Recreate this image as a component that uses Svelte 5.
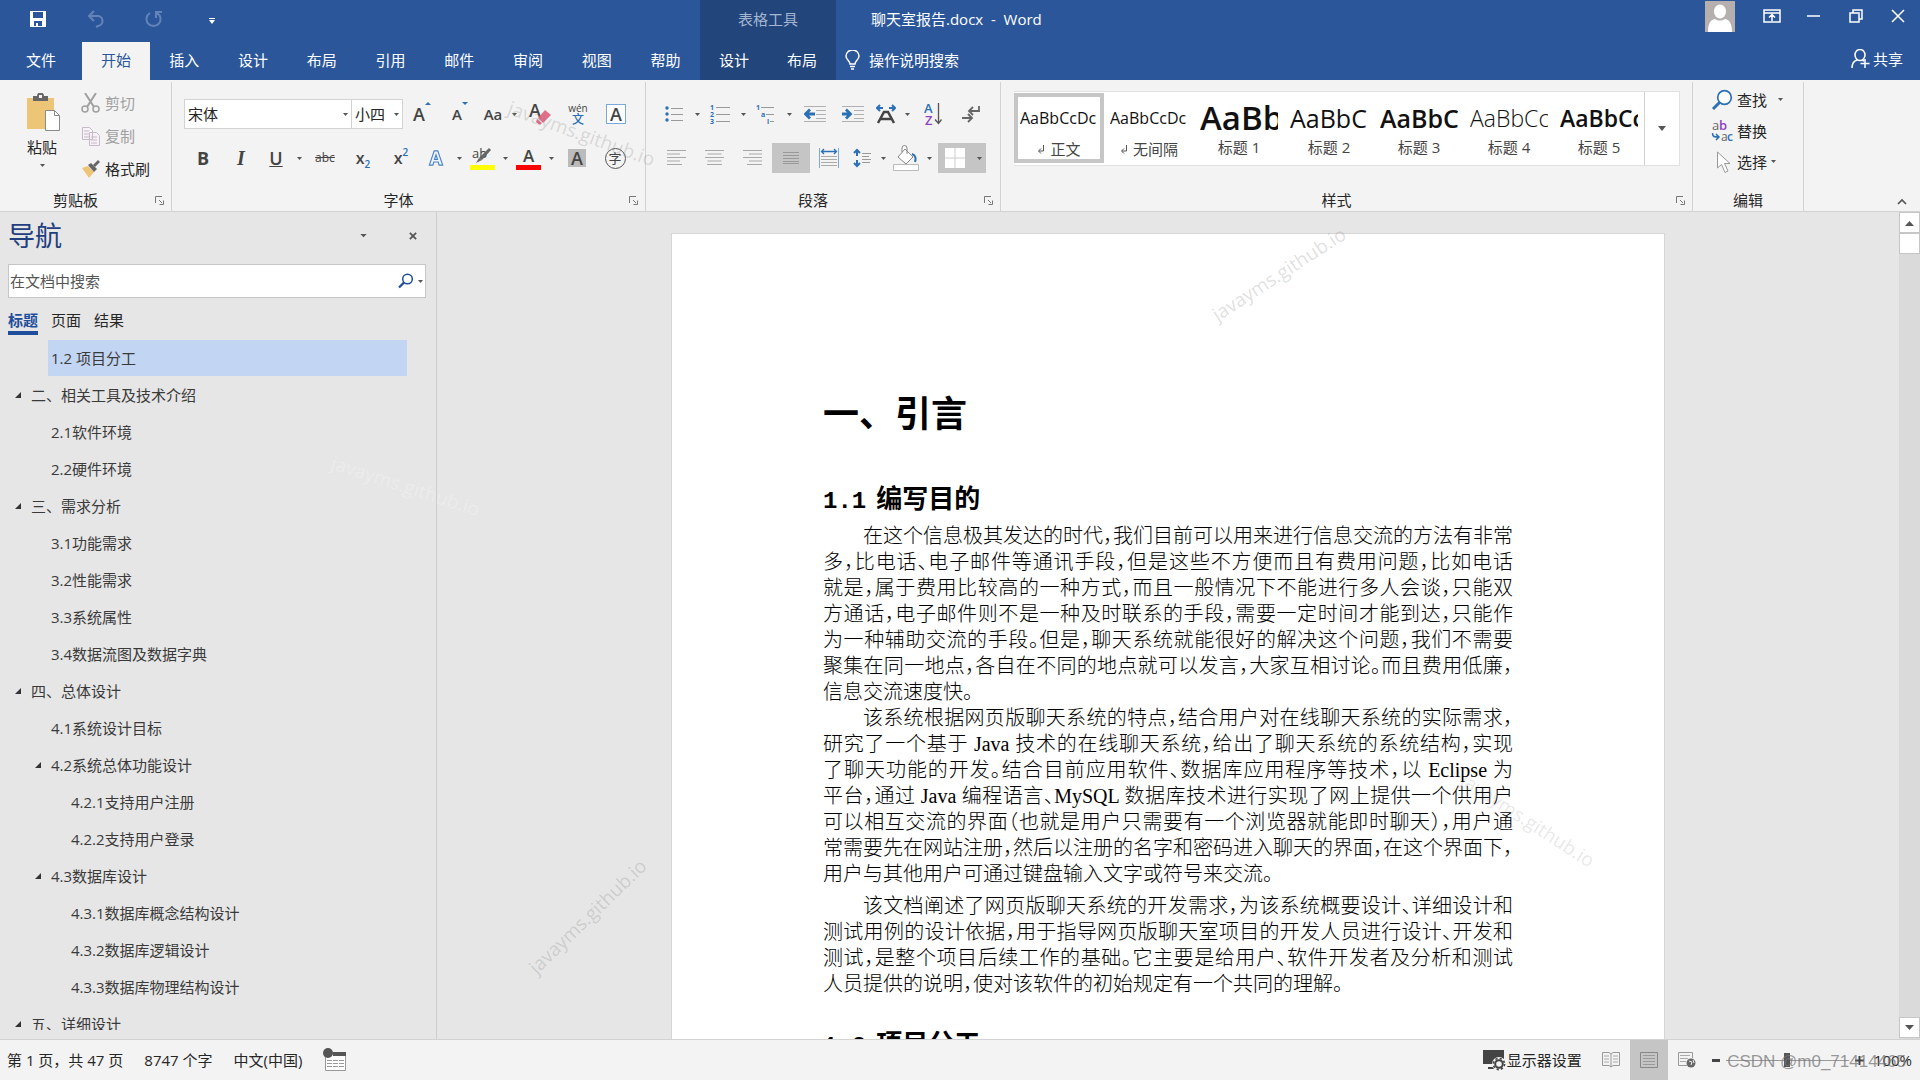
<script>
    let tabs = ['文件', '开始', '插入', '设计', '布局', '引用', '邮件', '审阅', '视图', '帮助'];
    let activeTab = '开始';

    let styles = [
        { name: '正文', sample: 'AaBbCcDc', kind: 'body', mark: true },
        { name: '无间隔', sample: 'AaBbCcDc', kind: 'body', mark: true },
        { name: '标题 1', sample: 'AaBb', kind: 'h1' },
        { name: '标题 2', sample: 'AaBbC', kind: 'h2' },
        { name: '标题 3', sample: 'AaBbC', kind: 'h3' },
        { name: '标题 4', sample: 'AaBbCc', kind: 'h4' },
        { name: '标题 5', sample: 'AaBbCc', kind: 'h5' }
    ];
    let activeStyle = '正文';

    let navTabs = ['标题', '页面', '结果'];
    let activeNav = '标题';

    let outline = [
        { level: 2, text: '1.2 项目分工' },
        { level: 1, text: '二、相关工具及技术介绍', open: true },
        { level: 2, text: '2.1软件环境' },
        { level: 2, text: '2.2硬件环境' },
        { level: 1, text: '三、需求分析', open: true },
        { level: 2, text: '3.1功能需求' },
        { level: 2, text: '3.2性能需求' },
        { level: 2, text: '3.3系统属性' },
        { level: 2, text: '3.4数据流图及数据字典' },
        { level: 1, text: '四、总体设计', open: true },
        { level: 2, text: '4.1系统设计目标' },
        { level: 2, text: '4.2系统总体功能设计', open: true },
        { level: 3, text: '4.2.1支持用户注册' },
        { level: 3, text: '4.2.2支持用户登录' },
        { level: 2, text: '4.3数据库设计', open: true },
        { level: 3, text: '4.3.1数据库概念结构设计' },
        { level: 3, text: '4.3.2数据库逻辑设计' },
        { level: 3, text: '4.3.3数据库物理结构设计' },
        { level: 1, text: '五、详细设计', open: true }
    ];
    let current = '1.2 项目分工';

    // each paragraph is kept as typeset lines
    let paragraphs = [
        [
            '在这个信息极其发达的时代，我们目前可以用来进行信息交流的方法有非常',
            '多，比电话、电子邮件等通讯手段，但是这些不方便而且有费用问题，比如电话',
            '就是，属于费用比较高的一种方式，而且一般情况下不能进行多人会谈，只能双',
            '方通话，电子邮件则不是一种及时联系的手段，需要一定时间才能到达，只能作',
            '为一种辅助交流的手段。但是，聊天系统就能很好的解决这个问题，我们不需要',
            '聚集在同一地点，各自在不同的地点就可以发言，大家互相讨论。而且费用低廉，',
            '信息交流速度快。'
        ],
        [
            '该系统根据网页版聊天系统的特点，结合用户对在线聊天系统的实际需求，',
            '研究了一个基于 Java 技术的在线聊天系统，给出了聊天系统的系统结构，实现',
            '了聊天功能的开发。结合目前应用软件、数据库应用程序等技术，以 Eclipse 为',
            '平台，通过 Java 编程语言、MySQL 数据库技术进行实现了网上提供一个供用户',
            '可以相互交流的界面（也就是用户只需要有一个浏览器就能即时聊天），用户通',
            '常需要先在网站注册，然后以注册的名字和密码进入聊天的界面，在这个界面下，',
            '用户与其他用户可通过键盘输入文字或符号来交流。'
        ],
        [
            '该文档阐述了网页版聊天系统的开发需求，为该系统概要设计、详细设计和',
            '测试用例的设计依据，用于指导网页版聊天室项目的开发人员进行设计、开发和',
            '测试，是整个项目后续工作的基础。它主要是给用户、软件开发者及分析和测试',
            '人员提供的说明，使对该软件的初始规定有一个共同的理解。'
        ]
    ];
</script>

{#snippet caret()}
    <svg class="caret" width="5" height="3" viewBox="0 0 5 3"><path d="M0 0h5L2.500 3z" fill="#555" /></svg>
{/snippet}

{#snippet launcher(label)}
    <button class="launcher" aria-label={label}>
        <svg width="9" height="9" viewBox="0 0 9 9"><path d="M.5 7V.5H7M4 4l3 3M8.500 4.500v4h-4" fill="none" stroke="#777" /></svg>
    </button>
{/snippet}

{#snippet lines(kind)}
    <svg width="20" height="18" viewBox="0 0 20 18">
        {#each [0, 1, 2, 3, 4] as i}
            {@const short = i % 2 ? (kind === 'center' ? 14 : 13) : i === 4 ? 15 : 19}
            {@const x = kind === 'left' ? 0 : kind === 'right' ? 19 - short : (19 - short) / 2}
            <path d="M{x} {1.5 + i * 3.5}h{short}" stroke="#a8a8a8" />
        {/each}
    </svg>
{/snippet}

{#snippet indent(dir)}
    <svg width="22" height="18" viewBox="0 0 22 18">
        <path d="M0 1.500h22M12 5.500h10M12 9.500h10M12 13.500h10M0 16.500h22" stroke="#b0b0b0" />
        {#if dir === 'out'}
            <path d="M11 9H2M6 4.500L1.500 9 6 13.500" fill="none" stroke="#2b70b5" stroke-width="2.800" />
        {:else}
            <path d="M0 9h8M4 4.500L8.500 9 4 13.500" fill="none" stroke="#2b70b5" stroke-width="2.800" />
        {/if}
    </svg>
{/snippet}

<div class="app">
    <header class="titlebar">
        <div class="left-block">
            <div class="quick">
                <button aria-label="保存">
                    <svg width="18" height="18" viewBox="0 0 18 18"><path d="M1 1h16v16H1z" fill="#fff" /><path d="M4 2h10v6H4zM5 11h8v5H5z" fill="#2b579a" /><path d="M7 13h2v3H7z" fill="#fff" /></svg>
                </button>
                <button aria-label="撤消">
                    <svg width="18" height="18" viewBox="0 0 18 18"><path d="M7 1L2 6l5 5M2 6h8a5 5 0 0 1 1 10l-2 1" fill="none" stroke="#6384b8" stroke-width="2" /></svg>
                </button>
                <button aria-label="重复">
                    <svg width="18" height="18" viewBox="0 0 18 18"><path d="M5 3a7 7 0 1 0 7 0M11 8V2h6" fill="none" stroke="#6384b8" stroke-width="2" /></svg>
                </button>
                <button class="qat-more" aria-label="自定义快速访问工具栏">
                    <svg width="6" height="6" viewBox="0 0 6 6"><path d="M0 0h6v1H0zM0 2h6L3 6z" fill="#fff" /></svg>
                </button>
            </div>
            <nav class="tabs">
                {#each tabs as tab}
                    <button class="tab" class:file={tab === '文件'} class:active={tab === activeTab}>{tab}</button>
                {/each}
            </nav>
        </div>
        <div class="context-block">
            <div class="context-title">表格工具</div>
            <div class="tabs">
                <button class="tab">设计</button>
                <button class="tab">布局</button>
            </div>
        </div>
        <div class="right-block">
            <div class="caption">
                <h1>聊天室报告.docx&nbsp; -&nbsp; Word</h1>
                <button class="avatar" aria-label="帐户">
                    <svg width="30" height="31" viewBox="0 0 30 31"><path d="M0 0h30v31H0z" fill="#b5b0ae" /><ellipse cx="15" cy="10.500" rx="6" ry="7" fill="#fff" /><path d="M3 31c0-8 2-12 7-13 3 2 7 2 10 0 5 1 7 5 7 13z" fill="#fff" /></svg>
                </button>
                <button class="win" aria-label="功能区显示选项">
                    <svg width="18" height="14" viewBox="0 0 18 14"><path d="M1 1h16v12H1zM1 4h16M9 12V6M6 8.500L9 5.500l3 3" fill="none" stroke="#fff" stroke-width="1.500" /></svg>
                </button>
                <button class="win" aria-label="最小化">
                    <svg width="14" height="14" viewBox="0 0 14 14"><path d="M0 7h13" stroke="#fff" stroke-width="1.500" /></svg>
                </button>
                <button class="win" aria-label="向下还原">
                    <svg width="14" height="14" viewBox="0 0 14 14"><path d="M1 4h9v9H1zM4 4V1h9v9h-3" fill="none" stroke="#fff" stroke-width="1.500" /></svg>
                </button>
                <button class="win" aria-label="关闭">
                    <svg width="14" height="14" viewBox="0 0 14 14"><path d="M1 1l12 12M13 1L1 13" stroke="#fff" stroke-width="1.500" /></svg>
                </button>
            </div>
            <div class="tell-row">
                <button class="tell">
                    <svg width="16" height="20" viewBox="0 0 16 20"><path d="M5 14c0-3-4-4-4-8a6.500 6 0 0 1 13 0c0 4-4 5-4 8zM5 16.500h5M6 19h3" fill="none" stroke="#fff" stroke-width="1.500" /></svg>
                    操作说明搜索
                </button>
                <button class="share">
                    <svg width="19" height="20" viewBox="0 0 19 20"><ellipse cx="9" cy="6" rx="5" ry="5.500" fill="none" stroke="#fff" stroke-width="1.500" /><path d="M1 19c0-5 2-7 5-8M11 11l2 1M14 10v9M9.500 14.500h9" fill="none" stroke="#fff" stroke-width="1.500" /></svg>
                    共享
                </button>
            </div>
        </div>
    </header>

    <section class="ribbon">
        <div class="group clipboard">
            <div class="body">
                <button class="paste">
                    <svg width="36" height="39" viewBox="0 0 36 39">
                        <path d="M3 5h27v31H3z" fill="#ecc576" />
                        <path d="M9 8V3h4a3.500 3.500 0 0 1 7 0h4v5z" fill="#666" />
                        <path d="M15 2h3v3h-3z" fill="#f3f3f3" />
                        <path d="M21.500 17.500h9l5 5v15h-14z" fill="#fff" stroke="#8a8a8a" />
                        <path d="M30.500 17.500v5h5" fill="none" stroke="#8a8a8a" />
                    </svg>
                    <span>粘贴</span>
                    {@render caret()}
                </button>
                <div class="clip-list">
                    <button class="small off">
                        <svg width="20" height="20" viewBox="0 0 20 20"><path d="M4 0l9 14M15 0L6 14" stroke="#a0a0a0" stroke-width="2" /><circle cx="4" cy="16" r="3" fill="none" stroke="#a0a0a0" stroke-width="1.500" /><circle cx="15" cy="16" r="3" fill="none" stroke="#a0a0a0" stroke-width="1.500" /></svg>
                        剪切
                    </button>
                    <button class="small off">
                        <svg width="20" height="20" viewBox="0 0 20 20"><path d="M1.500 1.500h7l3 3v9h-10zM8.500 6.500h7l3 3v10h-10z" fill="#f7f2f7" stroke="#c6b9c8" /><path d="M3 5h5M3 8h5M3 11h5M10 11h6M10 14h6M10 17h6" stroke="#c6b9c8" /></svg>
                        复制
                    </button>
                    <button class="small">
                        <svg width="20" height="20" viewBox="0 0 20 20"><path d="M1 9l6-2 6 6-5 6z" fill="#ecc576" /><path d="M7 6l3-2 6 6-3 3z" fill="#666" /><path d="M12 6l5-5 2 2-5 5z" fill="#666" /></svg>
                        格式刷
                    </button>
                </div>
            </div>
            <div class="foot"><span>剪贴板</span>{@render launcher('剪贴板设置')}</div>
        </div>

        <div class="group font">
            <div class="body rows">
                <div class="row">
                    <label class="combo face"><input value="宋体" aria-label="字体" />{@render caret()}</label>
                    <label class="combo size"><input value="小四" aria-label="字号" />{@render caret()}</label>
                    <button class="tool" aria-label="增大字号"><span class="glyph">A</span><svg class="tick" width="6" height="3" viewBox="0 0 6 3"><path d="M0 3h6L3 0z" fill="#2b70b5" /></svg></button>
                    <button class="tool" aria-label="减小字号"><span class="glyph less">A</span><svg class="tick" width="6" height="3" viewBox="0 0 6 3"><path d="M0 0h6L3 3z" fill="#2b70b5" /></svg></button>
                    <button class="tool tight" aria-label="更改大小写"><span class="less">Aa</span>{@render caret()}</button>
                    <button class="tool" aria-label="清除所有格式">
                        <svg width="24" height="26" viewBox="0 0 24 26"><text x="1" y="16" font-size="18" font-weight="600" fill="#444">A</text><path d="M10 17l7-8 6 5-8 8z" fill="#e0708a" /><path d="M9 18l5 4-2 2-4-3z" fill="#e0708a" /></svg>
                    </button>
                    <button class="tool wen" aria-label="拼音指南"><span>wén</span><b>文</b></button>
                    <button class="tool" aria-label="字符边框"><span class="boxed">A</span></button>
                </div>
                <div class="row">
                    <button class="tool bold" aria-label="加粗">B</button>
                    <button class="tool italic" aria-label="倾斜">I</button>
                    <button class="tool split" aria-label="下划线"><span class="under">U</span>{@render caret()}</button>
                    <button class="tool strike" aria-label="删除线">abc</button>
                    <button class="tool script" aria-label="下标">x<sub>2</sub></button>
                    <button class="tool script" aria-label="上标">x<sup>2</sup></button>
                    <button class="tool split" aria-label="文本效果">
                        <svg width="16" height="18" viewBox="0 0 18 20"><path d="M1.500 18L7 2h4l5.500 16h-4l-1-3.500h-5L5.500 18zM9 6.500l-1.700 5h3.400z" fill="#eef4fb" stroke="#4a82c4" stroke-width="1.300" /></svg>
                        {@render caret()}
                    </button>
                    <button class="tool split" aria-label="突出显示">
                        <svg width="26" height="26" viewBox="0 0 26 26"><text x="3" y="13" font-size="13" fill="#444">ab</text><path d="M20 3l2 2-9 10-3-2z" fill="#666" /><path d="M10 13l3 2-6 3z" fill="#666" /><path d="M1 20h25v5H1z" fill="#ff0" /></svg>
                        {@render caret()}
                    </button>
                    <button class="tool split" aria-label="字体颜色">
                        <svg width="26" height="26" viewBox="0 0 26 26"><text x="8" y="17" font-size="17" font-weight="600" fill="#444">A</text><path d="M1 20h25v5H1z" fill="#f00" /></svg>
                        {@render caret()}
                    </button>
                    <button class="tool" aria-label="字符底纹"><span class="shaded">A</span></button>
                    <button class="tool" aria-label="带圈字符"><span class="ringed">字</span></button>
                </div>
            </div>
            <div class="foot"><span>字体</span>{@render launcher('字体设置')}</div>
        </div>

        <div class="group para">
            <div class="body rows">
                <div class="row">
                    <button class="tool split" aria-label="项目符号">
                        <svg width="18" height="18" viewBox="0 0 18 18"><circle cx="2" cy="3" r="1.700" fill="#2b70b5" /><circle cx="2" cy="9" r="1.700" fill="#2b70b5" /><circle cx="2" cy="15" r="1.700" fill="#2b70b5" /><path d="M6 3.500h12M6 9.500h12M6 15.500h12" stroke="#999" /></svg>
                        {@render caret()}
                    </button>
                    <button class="tool split" aria-label="编号">
                        <svg width="20" height="20" viewBox="0 0 20 20"><g font-size="7" font-weight="700" fill="#2b70b5"><text x="0" y="6">1</text><text x="0" y="13">2</text><text x="0" y="20">3</text></g><path d="M6 3.500h14M6 10.500h14M6 17.500h14" stroke="#999" /></svg>
                        {@render caret()}
                    </button>
                    <button class="tool split" aria-label="多级列表">
                        <svg width="20" height="20" viewBox="0 0 20 20"><g font-size="7" font-weight="700" fill="#2b70b5"><text x="0" y="6">1</text><text x="5" y="13">a</text><text x="11" y="20">i</text></g><path d="M5 3.500h13M10 10.500h8M14 17.500h4" stroke="#999" /></svg>
                        {@render caret()}
                    </button>
                    <button class="tool" aria-label="减少缩进量">{@render indent('out')}</button>
                    <button class="tool" aria-label="增加缩进量">{@render indent('in')}</button>
                    <button class="tool tight" aria-label="中文版式">
                        <svg width="20" height="20" viewBox="0 0 20 20"><path d="M1 4h6M4 1L1 4l3 3M19 4h-6M16 1l3 3-3 3" fill="none" stroke="#2b70b5" stroke-width="2" /><path d="M2 19L8 8h4l6 11M5 15h10" fill="none" stroke="#444" stroke-width="2.500" /></svg>
                        {@render caret()}
                    </button>
                    <button class="tool" aria-label="排序">
                        <svg width="18" height="22" viewBox="0 0 18 22"><text x="0" y="10" font-size="13" font-weight="600" fill="#2b70b5">A</text><text x="1" y="22" font-size="13" font-weight="600" fill="#8e44c0">Z</text><path d="M14.500 0v20M11 16.500l3.500 4 3-4" fill="none" stroke="#555" stroke-width="1.300" /></svg>
                    </button>
                    <button class="tool" aria-label="显示编辑标记">
                        <svg width="20" height="18" viewBox="0 0 20 18"><path d="M18 1v5H9M12 2L8 6l4 4M1 13h9M7 9l4 4-4 4" fill="none" stroke="#666" stroke-width="1.800" /></svg>
                    </button>
                </div>
                <div class="row">
                    <button class="tool" aria-label="左对齐">{@render lines('left')}</button>
                    <button class="tool" aria-label="居中">{@render lines('center')}</button>
                    <button class="tool" aria-label="右对齐">{@render lines('right')}</button>
                    <button class="tool on" aria-label="两端对齐">
                        <svg width="16" height="14" viewBox="0 0 16 14"><path d="M0 1.500h16M0 4.500h16M0 7.500h16M0 10.500h16M0 12.500h16" stroke="#999" /></svg>
                    </button>
                    <button class="tool" aria-label="分散对齐">
                        <svg width="20" height="20" viewBox="0 0 20 20"><path d="M.5 0v20M19.500 0v20" stroke="#7ba8d8" /><path d="M3 3.500h14M5 1L2.500 3.500 5 6M15 1l2.500 2.500L15 6" fill="none" stroke="#2b70b5" stroke-width="1.300" /><path d="M2 8.500h16M2 11.500h16M2 14.500h16M2 17.500h16" stroke="#aaa" /></svg>
                    </button>
                    <button class="tool tight" aria-label="行和段落间距">
                        <svg width="18" height="20" viewBox="0 0 18 20"><path d="M4 2v6M1 5l3-3 3 3M4 12v6M1 15l3 3 3-3" fill="none" stroke="#2b70b5" stroke-width="2" /><path d="M9 5.500h9M9 8.500h7M9 11.500h9M9 14.500h8" stroke="#999" /></svg>
                        {@render caret()}
                    </button>
                    <button class="tool split" aria-label="底纹">
                        <svg width="26" height="26" viewBox="0 0 26 26"><path d="M12 4l8 8-7 7-8-7zM9 7V3a2 2 0 0 1 5 0v6" fill="#fff" stroke="#888" /><path d="M19 9c4 1 4 5 3 8" fill="none" stroke="#2b70b5" stroke-width="2" /><path d="M.5 19.500h25v6H.5z" fill="#fff" stroke="#bbb" /></svg>
                        {@render caret()}
                    </button>
                    <button class="tool wide on" aria-label="边框">
                        <svg width="20" height="20" viewBox="0 0 20 20"><path d="M0 0h20v20H0z" fill="#fff" /><path d="M10 0v20M0 10h20" stroke="#ccc" /></svg>
                        {@render caret()}
                    </button>
                </div>
            </div>
            <div class="foot"><span>段落</span>{@render launcher('段落设置')}</div>
        </div>

        <div class="group style-group">
            <div class="body">
                <div class="gallery">
                    {#each styles as style}
                        <button class="style" class:chosen={style.name === activeStyle}>
                            <span class="sample {style.kind}">{style.sample}</span>
                            <span class="style-name">
                                {#if style.mark}
                                    <svg width="8" height="9" viewBox="0 0 8 9"><path d="M6.500 0v6H2M4 3.500L1.500 6 4 8.500" fill="none" stroke="#555" /></svg>
                                {/if}
                                {style.name}
                            </span>
                        </button>
                    {/each}
                    <button class="more" aria-label="其他样式"><svg width="10" height="6" viewBox="0 0 10 6"><path d="M1 0h8L5 5z" fill="#555" /></svg></button>
                </div>
            </div>
            <div class="foot"><span>样式</span>{@render launcher('样式窗格')}</div>
        </div>

        <div class="group edit">
            <div class="body edit-list">
                <button class="small">
                    <svg width="22" height="22" viewBox="0 0 22 22"><circle cx="13.500" cy="8.500" r="6.800" fill="#fff" stroke="#2b70b5" stroke-width="1.700" /><path d="M8.500 13.500L2 20" stroke="#2b70b5" stroke-width="3" /></svg>
                    查找
                    <i>{@render caret()}</i>
                </button>
                <button class="small">
                    <svg width="22" height="22" viewBox="0 0 22 22"><g font-size="13"><text x="1" y="10" fill="#666">a</text><text x="8" y="10" fill="#8e44c0" font-weight="600">b</text><text x="10" y="21" fill="#666" font-size="12">a</text><text x="16" y="21" fill="#2b70b5" font-size="12" font-weight="600">c</text></g><path d="M1.500 13c0 4 2 4 6 4M5 14l3 3-3 3" fill="none" stroke="#2b70b5" stroke-width="1.500" /></svg>
                    替换
                </button>
                <button class="small">
                    <svg width="22" height="22" viewBox="0 0 22 22"><path d="M6.500 1v16l4-3.500 3.500 8 3-1.500-3.500-7.500h5.500z" fill="#fff" stroke="#999" /></svg>
                    选择
                    {@render caret()}
                </button>
            </div>
            <div class="foot"><span>编辑</span></div>
        </div>
        <button class="collapse" aria-label="折叠功能区"><svg width="10" height="7" viewBox="0 0 10 7"><path d="M1 6l4-4 4 4" fill="none" stroke="#555" stroke-width="1.700" /></svg></button>
        <span class="watermark wm-ribbon">javayms.github.io</span>
    </section>

    <main class="workspace">
        <aside class="nav">
            <div class="nav-head">
                <h2>导航</h2>
                <button aria-label="任务窗格选项"><svg width="7" height="4" viewBox="0 0 8 5"><path d="M0 0h8L4 4z" fill="#555" /></svg></button>
                <button aria-label="关闭窗格"><svg width="8" height="8" viewBox="0 0 9 9"><path d="M1 1l7 7M8 1L1 8" stroke="#555" stroke-width="2" /></svg></button>
            </div>
            <div class="search">
                <input placeholder="在文档中搜索" aria-label="在文档中搜索" />
                <button aria-label="搜索">
                    <svg width="16" height="16" viewBox="0 0 16 16"><circle cx="9.500" cy="6" r="4.800" fill="none" stroke="#1f4e9c" stroke-width="1.500" /><path d="M6 9.500L1 14.500" stroke="#1f4e9c" stroke-width="2.300" /></svg>
                    {@render caret()}
                </button>
            </div>
            <div class="nav-tabs">
                {#each navTabs as tab}
                    <button class:active={tab === activeNav}>{tab}</button>
                {/each}
            </div>
            <ul class="outline">
                {#each outline as item}
                    <li class="level{item.level}">
                        <span class="arrow">
                            {#if item.open}<svg width="6" height="6" viewBox="0 0 7 7"><path d="M7 0v7H0z" fill="#333" /></svg>{/if}
                        </span>
                        <a href="#doc" class:current={item.text === current}>{item.text}</a>
                    </li>
                {/each}
            </ul>
            <span class="watermark wm-nav">javayms.github.io</span>
        </aside>

        <div class="canvas">
            <article class="page" id="doc">
                <h1>一、引言</h1>
                <h2><span>1.1</span>编写目的</h2>
                {#each paragraphs as para}
                    <p>
                        {#each para as line}
                            <span class="line">{line}</span>
                        {/each}
                    </p>
                {/each}
                <h2><span>1.2</span>项目分工</h2>
            </article>
            <span class="watermark wm-top">javayms.github.io</span>
            <span class="watermark wm-side">javayms.github.io</span>
            <span class="watermark wm-low">javayms.github.io</span>
        </div>

        <div class="scroll">
            <button aria-label="向上滚动"><svg width="9" height="6" viewBox="0 0 9 6"><path d="M0 6h9L4.500 1z" fill="#555" /></svg></button>
            <div class="thumb"></div>
            <button class="down" aria-label="向下滚动"><svg width="9" height="6" viewBox="0 0 9 6"><path d="M0 0h9L4.500 5z" fill="#555" /></svg></button>
        </div>
    </main>

    <footer class="status">
        <span>第 1 页，共 47 页</span>
        <span>8747 个字</span>
        <span>中文(中国)</span>
        <button aria-label="宏录制">
            <svg width="24" height="24" viewBox="0 0 24 24"><path d="M2.500 5.500h20v17h-20z" fill="#fff" stroke="#999" /><path d="M10 4h13v4H10z" fill="#555" /><circle cx="5" cy="5" r="5" fill="#555" /><path d="M4 12.500h17M4 15.500h17M4 18.500h17" stroke="#999" stroke-dasharray="5 1" /></svg>
        </button>
        <div class="spacer"></div>
        <button class="display">
            <svg width="23" height="22" viewBox="0 0 23 22"><path d="M0 1h21v14H0zM5 18h7v2H5z" fill="#444" /><circle cx="16" cy="15" r="7" fill="#f3f3f3" /><circle cx="16" cy="15" r="3.800" fill="none" stroke="#444" stroke-width="2" /><circle cx="16" cy="15" r="5.600" fill="none" stroke="#444" stroke-width="1.600" stroke-dasharray="2.200 2.200" /></svg>
            显示器设置
        </button>
        <button class="view" aria-label="阅读视图">
            <svg width="18" height="16" viewBox="0 0 18 16"><path d="M9 2L7 .5H.5v13H7L9 15l2-1.500h6.500V.5H11zM9 2v13" fill="none" stroke="#999" /><path d="M2 4h5M2 7h5M2 10h5M11 4h5M11 7h5M11 10h5" stroke="#aaa" /></svg>
        </button>
        <button class="view on" aria-label="页面视图">
            <svg width="18" height="16" viewBox="0 0 18 16"><path d="M.5.5h17v15H.5z" fill="none" stroke="#888" /><path d="M3 3.500h12M3 6.500h12M3 9.500h12M3 12.500h12" stroke="#999" /></svg>
        </button>
        <button class="view" aria-label="Web 版式视图">
            <svg width="18" height="16" viewBox="0 0 18 16"><path d="M9 13.500H.5V.5h14V6" fill="none" stroke="#999" /><path d="M2 3.500h10M2 6.500h8M2 9.500h6" stroke="#aaa" /><circle cx="13" cy="11" r="4.500" fill="#666" /><path d="M11 9l3 1-1 3M15 8l1 3" stroke="#eee" fill="none" /></svg>
        </button>
        <button class="step" aria-label="缩小"><svg width="9" height="3" viewBox="0 0 9 3"><path d="M0 0h8v3H0z" fill="#444" /></svg></button>
        <input class="zoom" type="range" min="10" max="190" value="100" aria-label="显示比例" />
        <button class="step" aria-label="放大"><svg width="9" height="9" viewBox="0 0 9 9"><path d="M0 4.500h9M4.500 0v9" stroke="#444" stroke-width="2" /></svg></button>
        <span class="percent">100%</span>
        <span class="credit">CSDN @m0_71414465</span>
    </footer>
</div>

<style>
    :global(body){
        margin: 0;
        overflow: hidden;
    }
    .app{
        display: flex;
        flex-direction: column;
        height: 100vh;
        overflow: hidden;
        background: #e6e6e6;
        color: #262626;
        font: 15px/20px "Open Sans", "Noto Sans CJK SC", sans-serif;
    }
    button, input{
        font: inherit;
        color: inherit;
        background: none;
        border: 0;
        padding: 0;
        margin: 0;
    }
    svg{
        display: block;
        flex: none;
    }
    h1, h2, p, ul{
        margin: 0;
        padding: 0;
        font-weight: 400;
        font-size: inherit;
    }

    /* title bar */
    .titlebar{
        display: flex;
        height: 80px;
        flex: none;
        background: #2b579a;
        color: #fff;
    }
    .left-block, .context-block, .right-block{
        display: flex;
        flex-direction: column;
    }
    .left-block{
        width: 700px;
    }
    .context-block{
        width: 136px;
        background: #22457b;
    }
    .right-block{
        flex: 1;
    }
    .quick{
        display: flex;
        height: 42px;
        padding-left: 9px;
    }
    .quick button{
        width: 58px;
        height: 38px;
        display: flex;
        align-items: center;
        justify-content: center;
    }
    .quick .qat-more{
        padding-top: 4px;
    }
    .tabs{
        display: flex;
        height: 38px;
    }
    .tab{
        flex: 1;
        padding-bottom: 2px;
    }
    .tab.file{
        flex: none;
        width: 82px;
    }
    .tab.active{
        flex: none;
        width: 68px;
        background: #f3f3f3;
        color: #2b579a;
    }
    .context-title{
        height: 42px;
        line-height: 38px;
        text-align: center;
        color: #a3b5d1;
    }
    .caption{
        display: flex;
        height: 42px;
        padding-right: 1px;
    }
    .caption h1{
        flex: 1;
        padding-left: 35px;
        line-height: 38px;
    }
    .avatar{
        height: 32px;
        margin-right: 16px;
    }
    .win{
        width: 42px;
        height: 32px;
        display: flex;
        align-items: center;
        justify-content: center;
    }
    .tell-row{
        display: flex;
        justify-content: space-between;
        height: 36px;
        padding: 0 17px 2px 9px;
    }
    .tell, .share{
        display: flex;
        align-items: center;
        gap: 8px;
    }
    .share{
        gap: 3px;
        height: 34px;
    }

    /* ribbon */
    .ribbon{
        position: relative;
        display: flex;
        flex: none;
        height: 132px;
        padding-top: 2px;
        box-sizing: border-box;
        background: #f3f3f3;
        border-bottom: 1px solid #d2d2d2;
    }
    .group{
        display: flex;
        flex-direction: column;
        box-sizing: border-box;
        border-right: 1px solid #d2d2d2;
    }
    .clipboard{
        width: 172px;
    }
    .font{
        width: 474px;
    }
    .para{
        width: 355px;
    }
    .style-group{
        width: 692px;
    }
    .edit{
        width: 111px;
    }
    .body{
        flex: 1;
        display: flex;
    }
    .foot{
        display: flex;
        height: 20px;
        align-items: center;
        padding-bottom: 1px;
    }
    .foot span{
        flex: 1;
        text-align: center;
    }
    .launcher{
        width: 20px;
        padding-left: 4px;
    }
    .paste{
        width: 52px;
        margin-left: 16px;
        padding-top: 11px;
        display: flex;
        flex-direction: column;
        align-items: center;
    }
    .paste span{
        margin: 5px 0 7px;
    }
    .clip-list{
        padding: 4px 0 0 13px;
        display: flex;
        flex-direction: column;
    }
    .small{
        display: flex;
        align-items: center;
        gap: 4px;
        height: 33px;
    }
    .small.off{
        color: #a0a0a0;
    }
    .rows{
        flex-direction: column;
        padding-top: 17px;
    }
    .row{
        display: flex;
        height: 30px;
        margin-bottom: 14px;
        align-items: center;
        padding-left: 12px;
    }
    .combo{
        display: flex;
        align-items: center;
        height: 30px;
        box-sizing: border-box;
        background: #fff;
        border: 1px solid #d2d2d2;
        padding: 0 3px;
    }
    .combo input{
        flex: 1;
        min-width: 0;
        outline: 0;
    }
    .combo.face{
        width: 168px;
    }
    .combo.size{
        width: 51px;
        border-left: 0;
    }
    .tool{
        width: 38px;
        height: 30px;
        flex: none;
        display: flex;
        align-items: center;
        justify-content: center;
        color: #444;
        font-size: 18px;
    }
    .tool.split, .tool.tight, .tool.wide{
        display: grid;
        grid-template-columns: 1fr 14px;
        justify-items: center;
    }
    .tool.split{
        width: 46px;
    }
    .tool.tight{
        width: 42px;
    }
    .tool.wide{
        width: 48px;
        margin-left: 2px;
    }
    .on{
        background: #c5c5c5;
    }
    .glyph{
        font-size: 18px;
        font-weight: 600;
    }
    .less{
        font-size: 15px;
        font-weight: 600;
    }
    .tick{
        align-self: flex-start;
        margin-top: 3px;
    }
    .wen{
        flex-direction: column;
        font-size: 10px;
        line-height: 10px;
    }
    .wen b{
        font-size: 12px;
        line-height: 13px;
        color: #2b70b5;
        font-weight: 500;
    }
    .boxed{
        width: 18px;
        height: 18px;
        line-height: 18px;
        border: 1px solid #7ba8d8;
        background: #fff;
        font-weight: 600;
    }
    .shaded{
        width: 18px;
        height: 18px;
        line-height: 18px;
        background: #bbb;
        font-weight: 600;
    }
    .ringed{
        width: 19px;
        height: 19px;
        line-height: 18px;
        border: 1px solid #555;
        border-radius: 50%;
        font-size: 13px;
    }
    .bold{
        font-weight: 700;
    }
    .italic{
        font-family: "Liberation Serif", serif;
        font-style: italic;
        font-size: 20px;
        font-weight: 700;
    }
    .under{
        text-decoration: underline;
        font-weight: 600;
    }
    .strike{
        text-decoration: line-through;
        font-size: 12px;
    }
    .script{
        font-weight: 600;
        font-size: 16px;
    }
    .script sub, .script sup{
        font-size: 10px;
        line-height: 10px;
        color: #2b70b5;
    }
    .script sub{
        align-self: flex-end;
        margin-bottom: 4px;
    }
    .script sup{
        align-self: flex-start;
        margin-top: 4px;
    }
    .gallery{
        display: flex;
        height: 75px;
        margin: 9px 0 0 13px;
        box-sizing: border-box;
        background: #fff;
        border: 1px solid #e1e1e1;
        border-left: 0;
    }
    .style{
        width: 90px;
        height: 70px;
        margin-top: 1px;
        box-sizing: border-box;
        border: 4px solid transparent;
        display: flex;
        flex-direction: column;
        align-items: center;
    }
    .style.chosen{
        border-color: #c6c6c6;
    }
    .sample{
        width: 78px;
        height: 40px;
        line-height: 42px;
        overflow: hidden;
        text-align: left;
        white-space: nowrap;
        color: #111;
        font-size: 16px;
    }
    .sample.h1{
        font-size: 33px;
        font-weight: 600;
    }
    .sample.h2{
        font-size: 25px;
    }
    .sample.h3{
        font-size: 25px;
        font-weight: 600;
    }
    .sample.h4{
        font-size: 23px;
        font-weight: 300;
    }
    .sample.h5{
        font-size: 23px;
        font-weight: 600;
    }
    .style-name{
        display: flex;
        align-items: center;
        gap: 5px;
        color: #444;
    }
    .more{
        flex: 1;
        width: 35px;
        border-left: 1px solid #d2d2d2;
        display: flex;
        align-items: center;
        justify-content: center;
    }
    .edit-list{
        flex-direction: column;
        padding: 2px 0 0 18px;
    }
    .edit-list .small{
        height: 31px;
    }
    .edit-list i{
        margin-left: 7px;
    }
    .collapse{
        margin: auto 13px 6px auto;
    }

    /* workspace */
    .workspace{
        flex: 1;
        min-height: 0;
        display: flex;
    }
    .nav{
        position: relative;
        width: 437px;
        flex: none;
        display: flex;
        flex-direction: column;
        border-right: 1px solid #cdcdcd;
        padding-bottom: 9px;
        box-sizing: border-box;
    }
    .nav-head{
        display: flex;
        align-items: center;
        height: 48px;
        padding: 0 16px 0 8px;
    }
    .nav-head h2{
        flex: 1;
        font-size: 27px;
        line-height: 40px;
        color: #1f3f7f;
    }
    .nav-head button{
        width: 14px;
        display: flex;
        justify-content: center;
        margin-left: 36px;
    }
    .search{
        display: flex;
        height: 34px;
        margin: 4px 10px 0 8px;
        box-sizing: border-box;
        background: #fff;
        border: 1px solid #c6c6c6;
    }
    .search input{
        flex: 1;
        padding-left: 1px;
        outline: 0;
    }
    .search input::placeholder{
        color: #555;
        opacity: 1;
    }
    .search button{
        display: flex;
        align-items: center;
        gap: 4px;
        padding-right: 2px;
    }
    .nav-tabs{
        display: flex;
        gap: 13px;
        padding: 10px 0 0 8px;
        margin-bottom: 4px;
    }
    .nav-tabs button{
        height: 27px;
        line-height: 24px;
        border-bottom: 4px solid transparent;
        box-sizing: border-box;
    }
    .nav-tabs .active{
        color: #1f4e9c;
        font-weight: 700;
        border-color: #1f4e9c;
    }
    .outline{
        flex: 1;
        min-height: 0;
        overflow: hidden;
        list-style: none;
        color: #3a3a3a;
    }
    .outline li{
        display: flex;
        align-items: center;
        height: 37px;
        padding-right: 29px;
    }
    .level1{
        padding-left: 15px;
    }
    .level2{
        padding-left: 35px;
    }
    .level3{
        padding-left: 55px;
    }
    .arrow{
        width: 7px;
        margin-right: 6px;
    }
    .outline a{
        flex: 1;
        padding-left: 3px;
        line-height: 36px;
        color: inherit;
        text-decoration: none;
    }
    .outline .current{
        background: #c2d5f2;
    }
    .canvas{
        position: relative;
        flex: 1;
        overflow: hidden;
        padding-top: 21px;
    }
    .page{
        width: 690px;
        margin: 0 auto;
        padding: 154px 151px 300px;
        background: #fff;
        border: 1px solid #d6d6d6;
        color: #000;
    }
    .page h1{
        font-size: 36px;
        line-height: 52px;
        font-weight: 700;
        margin-bottom: 38px;
    }
    .page h2{
        display: flex;
        align-items: baseline;
        height: 44px;
        font-size: 26px;
        line-height: 40px;
        font-weight: 700;
        margin: 26px 0 1px;
    }
    .page h2 span{
        font-family: "Liberation Mono", monospace;
        font-size: 24px;
        margin-right: 10px;
    }
    .page p{
        font: 20px/26px "Liberation Serif", "Noto Sans CJK SC", serif;
        font-weight: 300;
        font-feature-settings: "halt";
    }
    .page p:last-of-type{
        margin-top: 6px;
    }
    .line{
        display: block;
        text-align-last: justify;
    }
    .line:first-child{
        padding-left: 40px;
    }
    .line:last-child{
        text-align-last: left;
    }
    .scroll{
        width: 21px;
        flex: none;
        display: flex;
        flex-direction: column;
        background: #dadada;
    }
    .scroll button, .thumb{
        height: 21px;
        box-sizing: border-box;
        background: #fff;
        border: 1px solid #c6c6c6;
        display: flex;
        align-items: center;
        justify-content: center;
    }
    .scroll .down{
        margin: auto 0 1px;
    }

    /* status bar */
    .status{
        position: relative;
        display: flex;
        align-items: center;
        flex: none;
        height: 41px;
        box-sizing: border-box;
        background: #f3f3f3;
        border-top: 1px solid #d2d2d2;
        padding: 0 8px 0 7px;
    }
    .status > span{
        margin-right: 21px;
    }
    .spacer{
        flex: 1;
    }
    .display{
        display: flex;
        align-items: center;
        gap: 1px;
        margin-right: 10px;
    }
    .view{
        width: 38px;
        height: 40px;
        display: flex;
        align-items: center;
        justify-content: center;
    }
    .step{
        width: 19px;
        display: flex;
        justify-content: center;
        margin-left: 1px;
    }
    .zoom{
        appearance: none;
        width: 123px;
        height: 16px;
        background: linear-gradient(#999, #999) center / 100% 1px no-repeat;
    }
    .zoom::-webkit-slider-thumb{
        appearance: none;
        width: 6px;
        height: 14px;
        background: #555;
    }
    .status .percent{
        margin: 0 0 0 5px;
    }
    .status .credit{
        position: absolute;
        right: 14px;
        top: 12px;
        margin: 0;
        font: 17px/20px "Liberation Sans", sans-serif;
        color: rgba(120, 120, 120, .75);
    }

    /* site marks laid over the window */
    .watermark{
        position: absolute;
        font-size: 19px;
        line-height: 24px;
        color: rgba(120, 120, 120, .24);
        transform-origin: left center;
        pointer-events: none;
        z-index: 1;
    }
    .wm-ribbon{
        left: 509px;
        top: 15px;
        transform: rotate(20deg);
    }
    .wm-nav{
        left: 332px;
        top: 238px;
        color: rgba(255, 255, 255, .25);
        transform: rotate(18deg);
    }
    .wm-top{
        left: 777px;
        top: 92px;
        transform: rotate(-33deg);
    }
    .wm-side{
        left: 1026px;
        top: 554px;
        color: rgba(120, 120, 120, .18);
        transform: rotate(33deg);
    }
    .wm-low{
        left: 95px;
        top: 746px;
        transform: rotate(-44deg);
    }
</style>
